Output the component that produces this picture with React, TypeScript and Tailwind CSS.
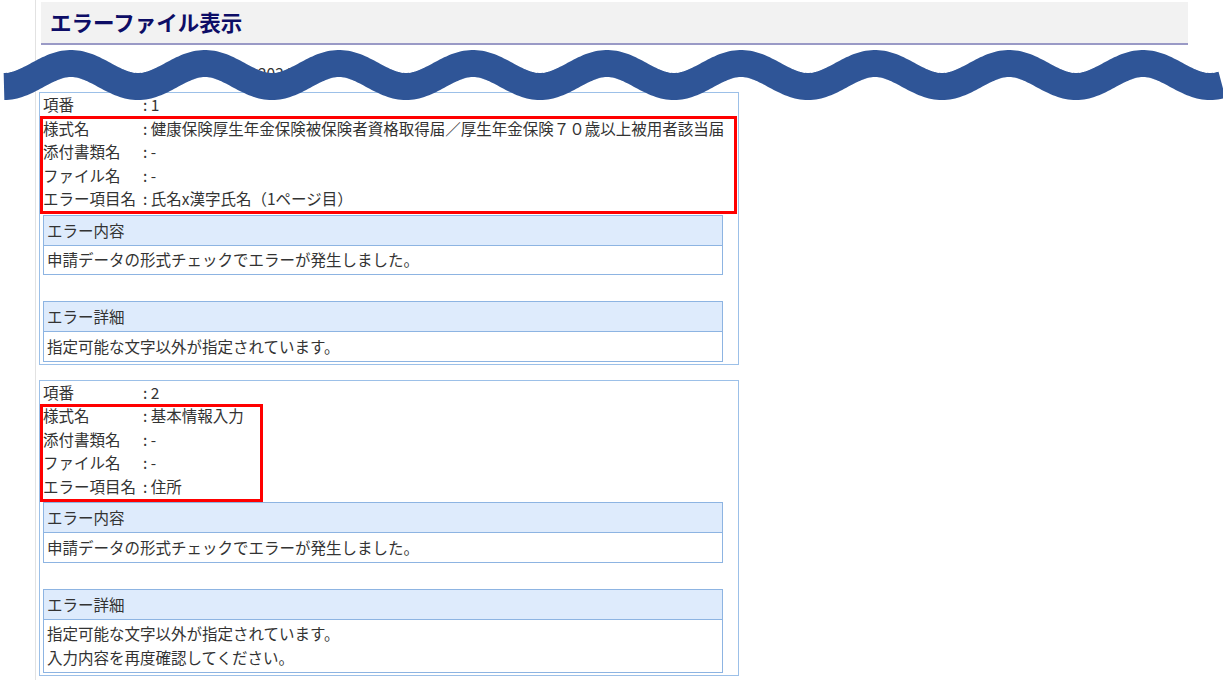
import { useMemo } from "react";

type ErrorItem = {
  no: string;
  form: string;
  attachment: string;
  file: string;
  field: string;
  content: string[];
  detail: string[];
  mark: { w: string };
};

const items: ErrorItem[] = [
  {
    no: "1",
    form: "健康保険厚生年金保険被保険者資格取得届／厚生年金保険７０歳以上被用者該当届",
    attachment: "-",
    file: "-",
    field: "氏名x漢字氏名（1ページ目）",
    content: ["申請データの形式チェックでエラーが発生しました。"],
    detail: ["指定可能な文字以外が指定されています。"],
    mark: { w: "w-[697px]" },
  },
  {
    no: "2",
    form: "基本情報入力",
    attachment: "-",
    file: "-",
    field: "住所",
    content: ["申請データの形式チェックでエラーが発生しました。"],
    detail: ["指定可能な文字以外が指定されています。", "入力内容を再度確認してください。"],
    mark: { w: "w-[223px]" },
  },
];

function Wave() {
  // wavy annotation stroke drawn across the top of the screenshot
  const d = useMemo(() => {
    const pts: string[] = [];
    for (let x = 4; x <= 1222; x += 2) {
      const y = 75 - 11.5 * Math.cos((2 * Math.PI * (x - 71)) / 134);
      pts.push(`${x === 4 ? "M" : "L"}${x} ${y.toFixed(2)}`);
    }
    return pts.join(" ");
  }, []);
  return (
    <svg
      className="pointer-events-none absolute left-0 top-0 z-20"
      width="1223"
      height="112"
      viewBox="0 0 1223 112"
    >
      <path d={d} fill="none" stroke="#2f5597" strokeWidth="27" strokeLinecap="butt" />
    </svg>
  );
}

function InfoTable({ title, lines }: { title: string; lines: string[] }) {
  return (
    <div className="w-[680px] border border-[#8db4e2]">
      <div className="h-[30px] border-b border-[#8db4e2] bg-[#deebfc] px-[3px] leading-[29px]">{title}</div>
      <div className="px-[3px] py-[2.5px] leading-[23.5px]">
        {lines.map((l) => (
          <div key={l}>{l}</div>
        ))}
      </div>
    </div>
  );
}

function Row({ label, value }: { label: string; value: string }) {
  return (
    <div className="flex h-[23.5px] items-center">
      <span className="w-[100px] shrink-0">{label}</span>
      <span>: {value}</span>
    </div>
  );
}

function ErrorCard({ item }: { item: ErrorItem }) {
  return (
    <div className="relative w-[700px] border border-[#9cc0e8] pb-[2px] pl-[3px]">
      <div>
        <Row label="項番" value={item.no} />
        <Row label="様式名" value={item.form} />
        <Row label="添付書類名" value={item.attachment} />
        <Row label="ファイル名" value={item.file} />
        <Row label="エラー項目名" value={item.field} />
      </div>
      <div className="mt-[4px] flex flex-col gap-[26px]">
        <InfoTable title="エラー内容" lines={item.content} />
        <InfoTable title="エラー詳細" lines={item.detail} />
      </div>
      <div className={`absolute left-0 top-[23px] h-[98px] border-[3px] border-[#ff0000] ${item.mark.w}`} />
    </div>
  );
}

export default function App() {
  return (
    <div
      className="relative h-[680px] w-[1223px] overflow-hidden bg-white text-[15.5px] text-[#333]"
      style={{ fontFamily: '"Noto Sans CJK JP", "Noto Sans", sans-serif' }}
    >
      <div className="ml-[35px] h-full border-l border-[#e2e2e2] pl-[3px] pt-[2px]">
        <div className="ml-[2px] flex h-[43px] w-[1147px] items-center border-b-2 border-[#9a9ac6] bg-[#f2f2f2] pl-[9px]">
          <h1 className="text-[21.5px] font-bold text-[#0d0d66]">エラーファイル表示</h1>
        </div>
        <div className="h-[47px] pl-[219px] pt-[16px] text-[#333]">2024</div>
        <div className="flex flex-col gap-[15px]">
          {items.map((it) => (
            <ErrorCard key={it.no} item={it} />
          ))}
        </div>
      </div>
      <Wave />
    </div>
  );
}
